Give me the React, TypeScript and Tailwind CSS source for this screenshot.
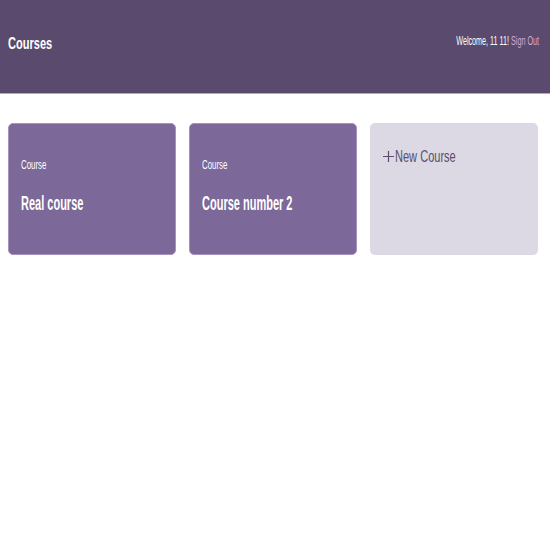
const courses = ["Real course", "Course number 2"];

export default function App() {
  return (
    <div className="min-h-[550px] bg-white font-['Liberation_Sans',Arial,sans-serif]">
      {/* Header */}
      <header className="flex h-[94px] items-center justify-between border-b border-[#b4a9c4] bg-[#594a6e] pl-2 pr-[11px]">
        <h1 className="mb-[6px] inline-block origin-left scale-x-[0.65] whitespace-nowrap text-[17px] font-bold text-white">
          Courses
        </h1>
        <div className="mb-[12px] inline-block origin-right scale-x-[0.6] whitespace-nowrap text-[12px]">
          <span className="text-white">Welcome, 11 11!</span>{" "}
          <a className="text-[#d6a8d8]">Sign Out</a>
        </div>
      </header>

      {/* Course grid */}
      <main className="grid grid-cols-[repeat(3,168px)] gap-[13px] px-2 pt-[29px]">
        {courses.map((c) => (
          <div
            key={c}
            className="h-[132px] rounded-[5px] border border-[#a593bd] bg-[#7c6899] px-[12px] pt-[28px] text-white"
          >
            <div className="inline-block origin-left scale-x-[0.63] whitespace-nowrap text-[12.5px] leading-none">
              Course
            </div>
            <div className="mt-[17px] origin-left scale-x-[0.55] whitespace-nowrap text-[20px] font-bold leading-none">
              {c}
            </div>
          </div>
        ))}
        <div className="flex h-[132px] items-start rounded-[5px] bg-[#dcd8e4] pl-[13px] pt-[26px] text-[#5b4f6b]">
          <svg width="11" height="11" viewBox="0 0 11 11" className="mt-[2px] shrink-0">
            <path d="M5.5 0v11M0 5.5h11" stroke="#5b4f6b" strokeWidth="1.2" />
          </svg>
          <span className="ml-[1px] inline-block origin-left scale-x-[0.69] whitespace-nowrap text-[16px] leading-none">
            New Course
          </span>
        </div>
      </main>
    </div>
  );
}
